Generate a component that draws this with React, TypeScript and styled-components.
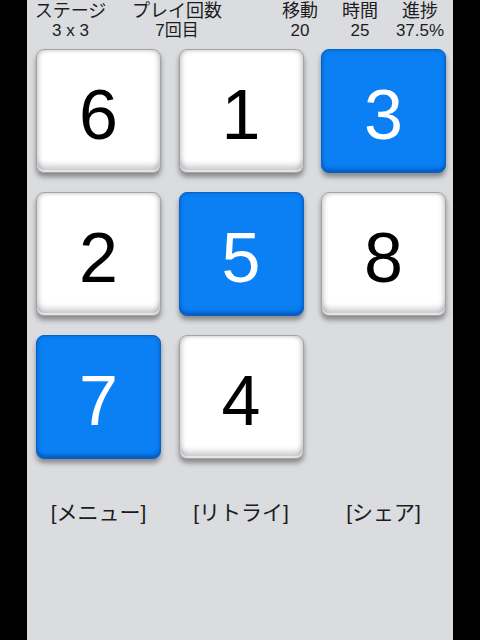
import React from 'react';
import styled, { createGlobalStyle, css } from 'styled-components';

const GlobalStyle = createGlobalStyle`
    html, body {
        margin: 0;
        padding: 0;
        background: #000;
    }
    body {
        font-family: "Liberation Sans", "Noto Sans CJK JP", sans-serif;
    }
`;

const Screen = styled.div({
    width: 426,
    minHeight: 640,
    margin: '0 auto',
    backgroundColor: '#dbdce0',
    color: '#1c1c1c',
    boxSizing: 'border-box'
});

const StatusBar = styled.header({
    display: 'grid',
    gridTemplateColumns: '87px 126px 30px 60px 60px 60px',
    paddingTop: 1,
    fontSize: 18,
    lineHeight: '20px',
    textAlign: 'center'
});

const Stat = styled.div<{ $col: number }>`
    grid-column: ${(props) => props.$col};
    white-space: nowrap;
`;

const StatValue = styled.div({
    fontSize: 17
});

const Board = styled.div({
    display: 'grid',
    gridTemplateColumns: 'repeat(3, 125px)',
    gridAutoRows: '124px',
    columnGap: 17.5,
    rowGap: 19,
    marginTop: 8,
    paddingLeft: 9
});

const whiteTile = css`
    background: #fff;
    border: 1px solid #a4a4a6;
    color: #000;
    box-shadow:
        inset 0 -2px 1px rgba(255, 255, 255, 0.6),
        inset 0 -9px 6px -3px rgba(0, 0, 0, 0.22),
        inset 4px 0 5px -2px rgba(0, 0, 0, 0.16),
        inset -4px 0 5px -2px rgba(0, 0, 0, 0.16),
        inset 0 3px 4px -2px rgba(0, 0, 0, 0.12),
        0 4px 5px rgba(0, 0, 0, 0.38);
`;

const blueTile = css`
    background: #0a80f4;
    border: 1px solid #0862c8;
    color: #fff;
    box-shadow:
        inset 0 -5px 4px -2px rgba(0, 40, 120, 0.35),
        inset 0 0 4px rgba(0, 40, 120, 0.32),
        0 4px 5px rgba(0, 0, 0, 0.38);
`;

const Tile = styled.div<{ $lit: boolean }>`
    box-sizing: border-box;
    border-radius: 8px;
    display: flex;
    align-items: center;
    justify-content: center;
    padding-top: 8px;
    font-family: "Liberation Sans", sans-serif;
    font-size: 70px;
    ${(props) => (props.$lit ? blueTile : whiteTile)}
`;

const EmptyCell = styled.div``;

const Actions = styled.nav({
    display: 'grid',
    gridTemplateColumns: 'repeat(3, 125px)',
    columnGap: 17.5,
    paddingLeft: 9,
    marginTop: 42
});

const ActionLink = styled.a({
    textAlign: 'center',
    fontSize: 21,
    lineHeight: '24px',
    color: '#1c1c1c',
    textDecoration: 'none',
    whiteSpace: 'nowrap',
    cursor: 'pointer'
});

const tiles: (number | null)[] = [6, 1, 3, 2, 5, 8, 7, 4, null];
const lit = new Set([3, 5, 7]);

export default function App() {
    return (
        <>
            <GlobalStyle />
            <Screen>
                <StatusBar>
                    <Stat $col={1}>ステージ<StatValue>3 x 3</StatValue></Stat>
                    <Stat $col={2}>プレイ回数<StatValue>7回目</StatValue></Stat>
                    <Stat $col={4}>移動<StatValue>20</StatValue></Stat>
                    <Stat $col={5}>時間<StatValue>25</StatValue></Stat>
                    <Stat $col={6}>進捗<StatValue>37.5%</StatValue></Stat>
                </StatusBar>
                <Board>
                    {tiles.map((n, i) =>
                        n === null
                            ? <EmptyCell key={i} />
                            : <Tile key={i} $lit={lit.has(n)}>{n}</Tile>
                    )}
                </Board>
                <Actions>
                    <ActionLink>[メニュー]</ActionLink>
                    <ActionLink>[リトライ]</ActionLink>
                    <ActionLink>[シェア]</ActionLink>
                </Actions>
            </Screen>
        </>
    );
}
